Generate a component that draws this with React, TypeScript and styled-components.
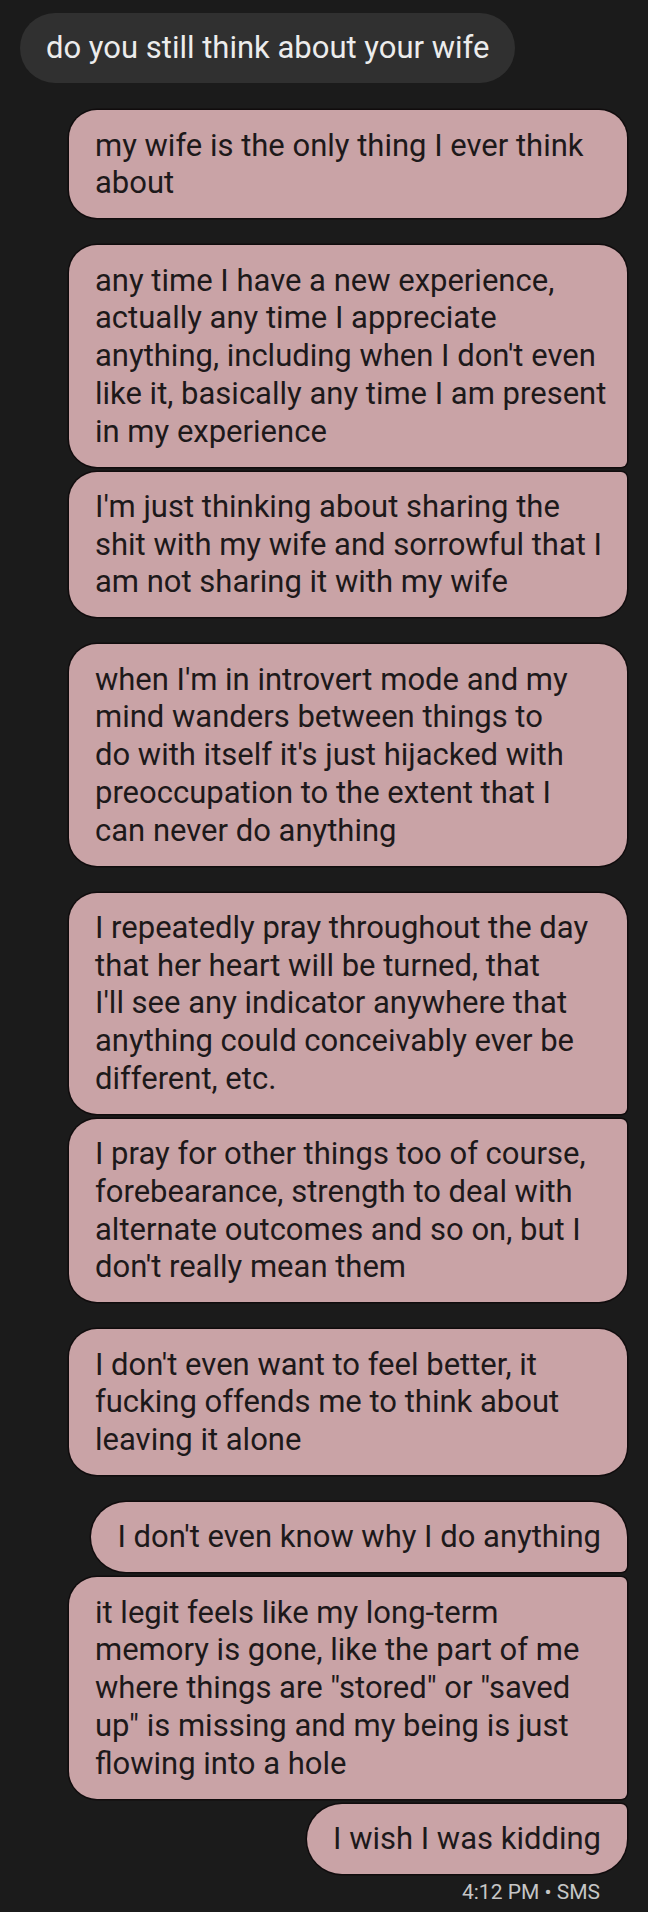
import React from 'react';
import styled, { createGlobalStyle } from 'styled-components';

const GlobalStyle = createGlobalStyle`
  html, body {
    margin: 0;
    padding: 0;
    background: #1b1b1b;
  }
  body {
    font-family: Roboto, 'Liberation Sans', sans-serif;
  }
`;

const Thread = styled.div`
  width: 648px;
  min-height: 1912px;
  box-sizing: border-box;
  padding: 13px 21px 0 20px;
  display: flex;
  flex-direction: column;
  gap: 27px;
  background: #1b1b1b;
`;

const Group = styled.div<{ $incoming?: boolean }>`
  display: flex;
  flex-direction: column;
  align-items: ${(p) => (p.$incoming ? 'flex-start' : 'flex-end')};
  gap: 5px;
`;

type Place = 'single' | 'first' | 'middle' | 'last';

const corners = (place: Place, big: number) => {
  const small = 6;
  const tr = place === 'middle' || place === 'last' ? small : big;
  const br = place === 'middle' || place === 'first' ? small : big;
  return `${big}px ${tr}px ${br}px ${big}px`;
};

const Bubble = styled.div<{ $incoming?: boolean; $wide?: boolean; $place: Place; $big: number }>`
  box-sizing: border-box;
  max-width: 558px;
  width: ${(p) => (p.$wide ? '558px' : 'auto')};
  padding: 16.25px 26px;
  font-size: 31px;
  line-height: 37.75px;
  white-space: pre;
  background: ${(p) => (p.$incoming ? '#303030' : '#c9a3a6')};
  color: ${(p) => (p.$incoming ? '#ececec' : '#1d191a')};
  border-radius: ${(p) => corners(p.$place, p.$big)};
  box-shadow: ${(p) => (p.$incoming ? 'none' : '0 0 0 1.5px rgba(10, 4, 5, 0.6)')};
`;

const Meta = styled.div`
  padding-right: 27px;
  font-size: 21px;
  line-height: 26px;
  color: #c6c6c6;
`;

type Message = string[];

type Block = {
  incoming?: boolean;
  messages: Message[];
};

const thread: Block[] = [
  { incoming: true, messages: [['do you still think about your wife']] },
  { messages: [['my wife is the only thing I ever think', 'about']] },
  {
    messages: [
      [
        'any time I have a new experience,',
        'actually any time I appreciate',
        "anything, including when I don't even",
        'like it, basically any time I am present',
        'in my experience',
      ],
      [
        "I'm just thinking about sharing the",
        'shit with my wife and sorrowful that I',
        'am not sharing it with my wife',
      ],
    ],
  },
  {
    messages: [
      [
        "when I'm in introvert mode and my",
        'mind wanders between things to',
        "do with itself it's just hijacked with",
        'preoccupation to the extent that I',
        'can never do anything',
      ],
    ],
  },
  {
    messages: [
      [
        'I repeatedly pray throughout the day',
        'that her heart will be turned, that',
        "I'll see any indicator anywhere that",
        'anything could conceivably ever be',
        'different, etc.',
      ],
      [
        'I pray for other things too of course,',
        'forebearance, strength to deal with',
        'alternate outcomes and so on, but I',
        "don't really mean them",
      ],
    ],
  },
  {
    messages: [
      [
        "I don't even want to feel better, it",
        'fucking offends me to think about',
        'leaving it alone',
      ],
    ],
  },
  {
    messages: [
      ["I don't even know why I do anything"],
      [
        'it legit feels like my long-term',
        'memory is gone, like the part of me',
        'where things are "stored" or "saved',
        'up" is missing and my being is just',
        'flowing into a hole',
      ],
      ['I wish I was kidding'],
    ],
  },
];

const placeOf = (index: number, count: number): Place => {
  if (count === 1) return 'single';
  if (index === 0) return 'first';
  if (index === count - 1) return 'last';
  return 'middle';
};

const App = () => (
  <>
    <GlobalStyle />
    <Thread>
      {thread.map((block, b) => (
        <Group key={`group-${b}`} $incoming={block.incoming}>
          {block.messages.map((lines, i) => (
            <Bubble
              key={`msg-${b}-${i}`}
              $incoming={block.incoming}
              $wide={lines.length > 1}
              $place={placeOf(i, block.messages.length)}
              $big={lines.length > 1 ? 28 : 35}
            >
              {lines.join('\n')}
            </Bubble>
          ))}
          {b === thread.length - 1 && <Meta>4:12 PM • SMS</Meta>}
        </Group>
      ))}
    </Thread>
  </>
);

export default App;
